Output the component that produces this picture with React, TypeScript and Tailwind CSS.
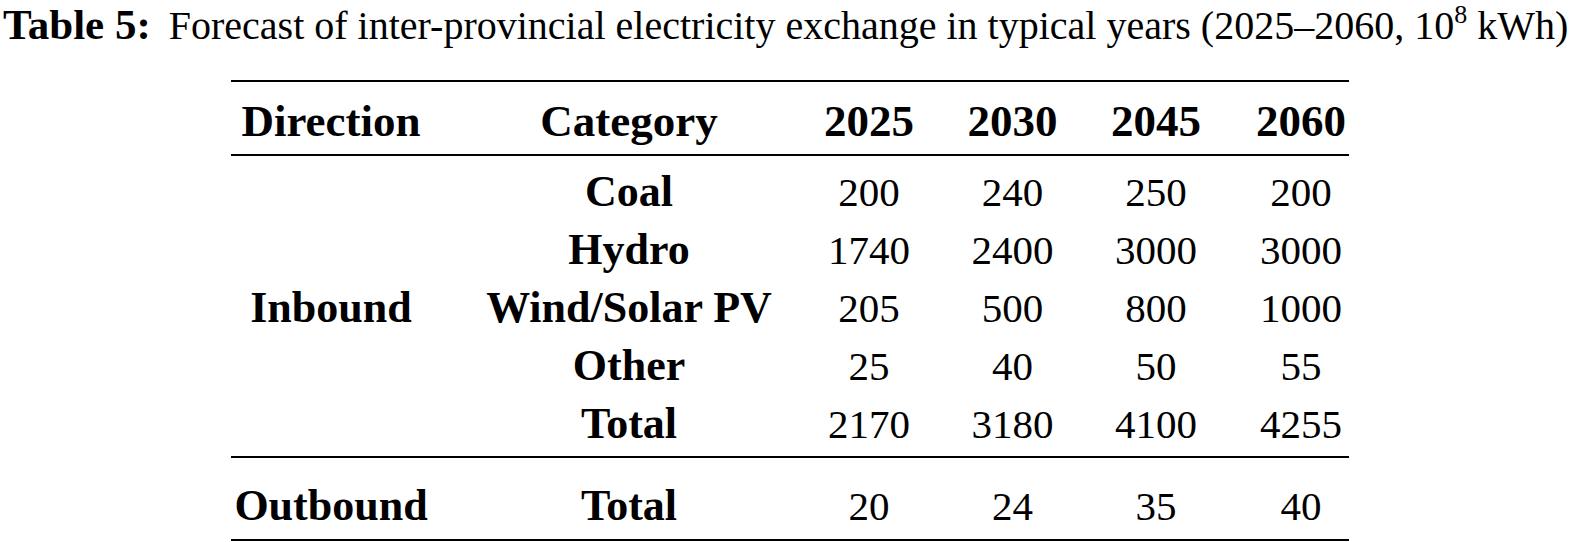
import React from "react";

const years = ["2025", "2030", "2045", "2060"];

type Row = { dir: string; cat: string; vals: string[] };

const inbound: Row[] = [
  { dir: "", cat: "Coal", vals: ["200", "240", "250", "200"] },
  { dir: "", cat: "Hydro", vals: ["1740", "2400", "3000", "3000"] },
  { dir: "Inbound", cat: "Wind/Solar PV", vals: ["205", "500", "800", "1000"] },
  { dir: "", cat: "Other", vals: ["25", "40", "50", "55"] },
  { dir: "", cat: "Total", vals: ["2170", "3180", "4100", "4255"] },
];

const gridCls =
  "grid grid-cols-[200px_366px_144px_143px_144px_121px] w-[1118px] items-baseline";

function DataRow({ r }: { r: Row }) {
  return (
    <div className={gridCls + " h-[58px] leading-[58px]"}>
      <div className="text-center font-bold text-[44px]">{r.dir}</div>
      <div className="text-center font-bold text-[44px] pl-[30px] whitespace-nowrap">{r.cat}</div>
      {r.vals.map((v, i) => (
        <div
          key={i}
          className={
            "text-center text-[41px]" + (i === 3 ? " pl-[25px]" : "")
          }
        >
          {v}
        </div>
      ))}
    </div>
  );
}

export default function App() {
  return (
    <div
      className="w-[1579px] h-[542px] bg-white text-black overflow-hidden"
      style={{ fontFamily: '"Liberation Serif", "Times New Roman", serif' }}
    >
      <div className="pt-[2px] pl-[3px] leading-[46px] whitespace-nowrap flex items-baseline">
        <span className="font-bold text-[43px]">Table 5:</span>
        <span className="ml-[18px] text-[40px]">
          Forecast of inter-provincial electricity exchange in typical years
          (2025–2060, 10<sup className="text-[26px] top-[-16px]">8</sup> kWh)
        </span>
      </div>

      <div className="ml-[231px] w-[1118px] mt-[31px]">
        <div className="h-[2px] bg-black" />
        <div className={gridCls + " pt-[10px] pb-[4px] leading-[58px] font-bold text-[45px]"}>
          <div className="text-center">Direction</div>
          <div className="text-center pl-[30px]">Category</div>
          {years.map((y, i) => (
            <div key={y} className={"text-center" + (i === 3 ? " pl-[25px]" : "")}>
              {y}
            </div>
          ))}
        </div>
        <div className="h-[2px] bg-black" />
        <div className="pt-[7px] pb-[3px]">
          {inbound.map((r, i) => (
            <DataRow key={i} r={r} />
          ))}
        </div>
        <div className="h-[2px] bg-black" />
        <div className="pt-[19px] pb-[4px]">
          <DataRow r={{ dir: "Outbound", cat: "Total", vals: ["20", "24", "35", "40"] }} />
        </div>
        <div className="h-[2px] bg-black" />
      </div>
    </div>
  );
}
